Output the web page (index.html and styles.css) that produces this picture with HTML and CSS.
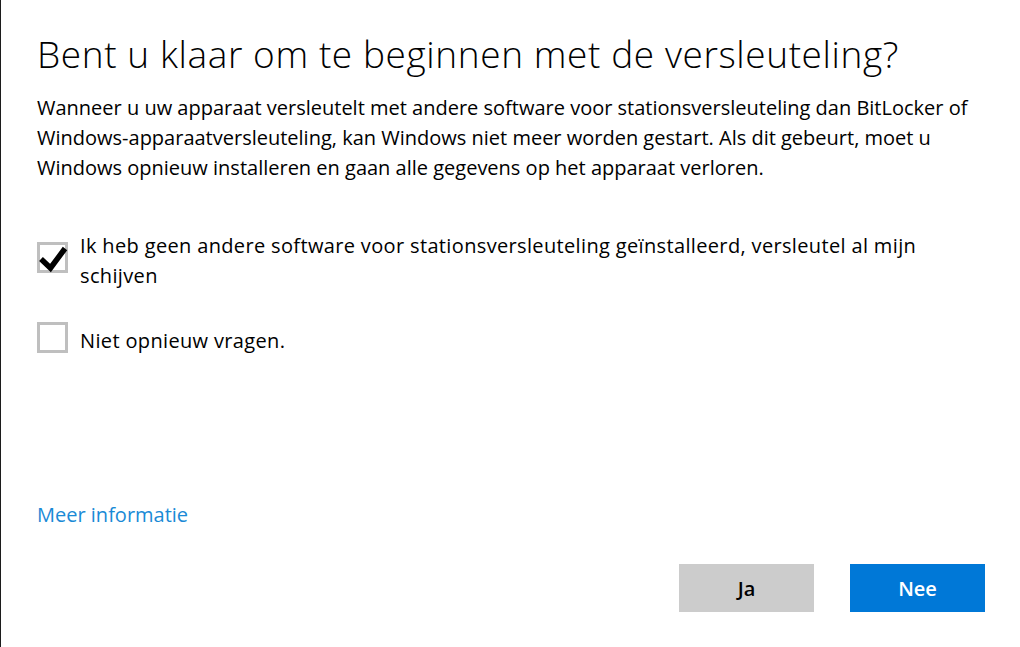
FILE: index.html
```
<!DOCTYPE html>
<html lang="nl">

<head>
    <meta charset="UTF-8">
    <meta name="viewport" content="width=device-width, initial-scale=1.0">
    <title>BitLocker</title>
    <link rel="stylesheet" href="styles.css">
</head>

<body>
    <div class="dialog">
        <h1>Bent u klaar om te beginnen met de versleuteling?</h1>

        <p class="intro">Wanneer u uw apparaat versleutelt met andere software voor stationsversleuteling dan BitLocker of
            Windows-apparaatversleuteling, kan Windows niet meer worden gestart. Als dit gebeurt, moet u
            Windows opnieuw installeren en gaan alle gegevens op het apparaat verloren.</p>

        <!-- Options -->
        <div class="options">
            <label class="option">
                <span class="box">
                    <svg viewBox="0 0 31 31" width="31" height="31">
                        <path d="M4 17 L13.5 26 L28 6.5" fill="none" stroke="#000" stroke-width="5.5" />
                    </svg>
                </span>
                <span class="option-text">Ik heb geen andere software voor stationsversleuteling geïnstalleerd, versleutel al mijn schijven</span>
            </label>
            <label class="option">
                <span class="box"></span>
                <span class="option-text">Niet opnieuw vragen.</span>
            </label>
        </div>

        <a href="#" class="more-link">Meer informatie</a>

        <div class="buttons">
            <button class="btn btn-yes">Ja</button>
            <button class="btn btn-no">Nee</button>
        </div>
    </div>
</body>

</html>
```

FILE: styles.css
```
html,
body {
    height: 100%;
}

body {
    margin: 0;
    background-color: #ffffff;
    color: #000000;
    font-family: 'Segoe UI', 'Open Sans', 'Noto Sans', sans-serif;
}

.dialog {
    box-sizing: border-box;
    height: 100%;
    border-left: 1px solid #1c1c1c;
    padding: 31px 35px 35px 36px;
    display: flex;
    flex-direction: column;
}

h1 {
    margin: 0 0 16px 0;
    font-size: 37px;
    font-weight: 300;
    line-height: 46px;
    letter-spacing: 0.6px;
}

.intro {
    margin: 0;
    font-size: 20px;
    line-height: 30px;
    max-width: 945px;
}

.options {
    margin-top: 40px;
    display: flex;
    flex-direction: column;
    gap: 27px;
}

.option {
    display: flex;
    align-items: center;
    gap: 12px;
    font-size: 20px;
    line-height: 30px;
}

.option-text {
    padding-top: 8px;
    max-width: 870px;
    letter-spacing: 0.35px;
}

.box {
    flex: none;
    box-sizing: border-box;
    width: 31px;
    height: 31px;
    border: 3px solid #bfbfbf;
    position: relative;
}

.box svg {
    position: absolute;
    left: -3px;
    top: -3px;
}

.more-link {
    margin-top: auto;
    color: #1a8ad6;
    text-decoration: none;
    font-size: 20px;
    line-height: 30px;
}

.buttons {
    margin-top: 34px;
    display: flex;
    justify-content: flex-end;
    gap: 36px;
}

.btn {
    width: 135px;
    height: 48px;
    border: none;
    font-family: inherit;
    font-size: 20px;
    font-weight: 600;
    cursor: pointer;
}

.btn-yes {
    background-color: #cccccc;
    color: #000000;
}

.btn-no {
    background-color: #0078d7;
    color: #ffffff;
}
```
